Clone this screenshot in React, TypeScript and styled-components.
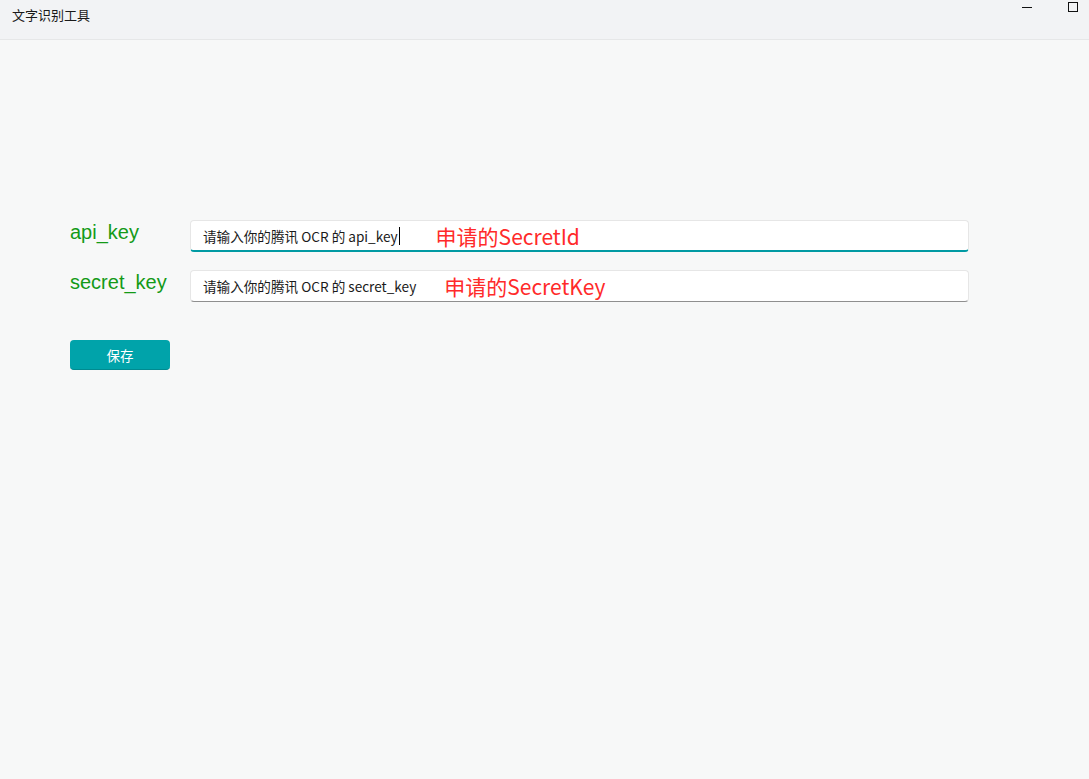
import React from "react";
import styled, { createGlobalStyle } from "styled-components";

const GlobalStyle = createGlobalStyle`
  html, body {
    margin: 0;
    padding: 0;
    height: 100%;
  }
  body {
    font-family: "Noto Sans CJK SC", "Noto Sans", sans-serif;
    background: #f7f8f8;
  }
`;

const fields = [
  { label: "api_key", placeholder: "请输入你的腾讯 OCR 的 api_key", note: "申请的SecretId", focused: true, noteGap: 36 },
  { label: "secret_key", placeholder: "请输入你的腾讯 OCR 的 secret_key", note: "申请的SecretKey", focused: false, noteGap: 28 },
];

const App: React.FC = () => {
  return (
    <>
      <GlobalStyle />
      <Window>
        <TitleBar>
          <Title>文字识别工具</Title>
          <Controls>
            <CtrlButton>
              <svg width="12" height="12" viewBox="0 0 12 12">
                <line x1="1" y1="6.5" x2="11" y2="6.5" stroke="#111" strokeWidth="1" />
              </svg>
            </CtrlButton>
            <CtrlButton>
              <svg width="12" height="12" viewBox="0 0 12 12">
                <rect x="1.5" y="1.5" width="9" height="9" fill="none" stroke="#111" strokeWidth="1" />
              </svg>
            </CtrlButton>
          </Controls>
        </TitleBar>
        <Content>
          <Form>
            {fields.map((f) => (
              <Row key={f.label}>
                <Label>{f.label}</Label>
                <Field focused={f.focused}>
                  <FieldText>{f.placeholder}</FieldText>
                  {f.focused && <Caret />}
                  <Note style={{ marginLeft: f.noteGap }}>{f.note}</Note>
                </Field>
              </Row>
            ))}
            <SaveButton>保存</SaveButton>
          </Form>
        </Content>
      </Window>
    </>
  );
};

const Window = styled.div`
  width: 100%;
  height: 100vh;
  display: flex;
  flex-direction: column;
  background: #f7f8f8;
`;

const TitleBar = styled.div`
  height: 39px;
  flex-shrink: 0;
  background: #f2f3f5;
  border-bottom: 1px solid #e6e7e8;
  display: flex;
  justify-content: space-between;
  align-items: flex-start;
`;

const Title = styled.div`
  padding: 6px 0 0 12px;
  font-size: 13px;
  line-height: 18px;
  color: #1a1a1a;
`;

const Controls = styled.div`
  display: flex;
  align-items: flex-start;
  gap: 34px;
  padding: 1px 10px 0 0;
`;

const CtrlButton = styled.div`
  width: 12px;
  height: 12px;
  display: flex;
`;

const Content = styled.div`
  flex: 1;
  padding: 180px 0 0 70px;
`;

const Form = styled.div`
  width: 900px;
  display: flex;
  flex-direction: column;
  gap: 18px;
`;

const Row = styled.div`
  display: flex;
  align-items: flex-start;
`;

const Label = styled.div`
  width: 120px;
  font-family: "Liberation Sans", Arial, sans-serif;
  font-size: 20px;
  line-height: 24px;
  color: #139a17;
`;

const Field = styled.div<{ focused: boolean }>`
  width: 779px;
  height: 32px;
  box-sizing: border-box;
  background: #ffffff;
  border: 1px solid #e6e6e6;
  border-bottom: ${(p) => (p.focused ? "2px solid #009aa3" : "1px solid #8f8f8f")};
  border-radius: 4px;
  display: flex;
  align-items: center;
  padding-left: 12px;
`;

const FieldText = styled.span`
  font-size: 13.6px;
  color: #1a1a1a;
  white-space: nowrap;
`;

const Caret = styled.span`
  display: inline-block;
  width: 1px;
  height: 18px;
  background: #000;
  margin-left: 1px;
`;

const Note = styled.span`
  font-size: 21px;
  color: #ff2a2a;
  white-space: nowrap;
`;

const SaveButton = styled.button`
  margin-top: 20px;
  width: 100px;
  height: 30px;
  background: #00a3aa;
  border: none;
  border-bottom: 1px solid #008a90;
  border-radius: 4px;
  color: #ffffff;
  font-family: "Noto Sans CJK SC", sans-serif;
  font-size: 13.5px;
  cursor: pointer;
`;

export default App;
